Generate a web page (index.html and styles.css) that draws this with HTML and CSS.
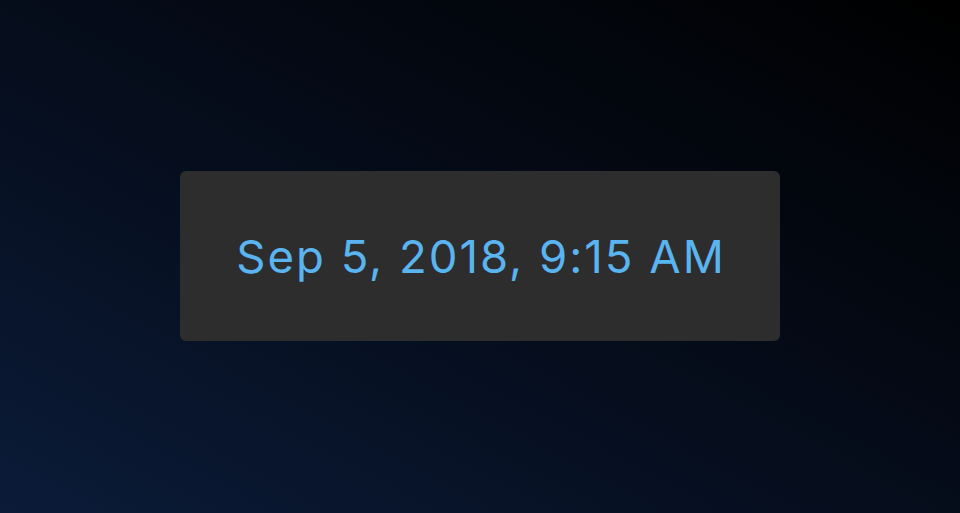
FILE: index.html
```html
<!DOCTYPE html>
<html>
<head>
<meta charset="utf-8">
<link rel="stylesheet" href="styles.css">
</head>
<body>
<main class="stage">
  <div class="card">
    <span class="date">Sep 5, 2018, 9:15 AM</span>
  </div>
</main>
</body>
</html>
```
FILE: styles.css
```css
html, body {
  margin: 0;
  padding: 0;
  height: 100%;
}
body {
  background: linear-gradient(to top right, #0b1b38 0%, #050c1a 50%, #000000 100%);
  font-family: Inter, "Noto Sans", sans-serif;
}
.stage {
  height: 513px;
  display: flex;
  align-items: center;
  justify-content: center;
}
.card {
  width: 600px;
  height: 170px;
  margin-top: -1px;
  background: #2d2d2d;
  border-radius: 6px;
  display: flex;
  align-items: center;
  justify-content: center;
}
.date {
  color: #5ab4f0;
  font-size: 45.5px;
  font-weight: 400;
  letter-spacing: 2px;
  margin-left: 2px;
}
```
